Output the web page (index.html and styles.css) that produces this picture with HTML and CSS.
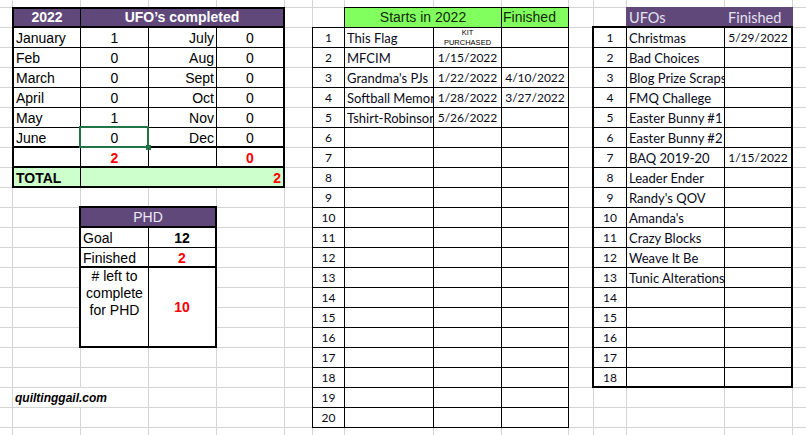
FILE: index.html
```html
<!DOCTYPE html>
<html lang="en">
<head>
<meta charset="utf-8">
<title>UFOs 2022</title>
<link rel="stylesheet" href="styles.css">
</head>
<body>
<div class="sheet">
  <div class="lines">
    <div></div><div></div><div></div><div></div><div></div>
    <div></div><div></div><div></div><div></div><div></div>
    <div></div><div></div><div></div><div></div><div></div>
  </div>

  <div class="tbl ufo">
    <div class="cell hd">2022</div>
    <div class="cell hd tr span3">UFO’s completed</div>
    <div class="cell">January</div><div class="cell c">1</div><div class="cell r">July</div><div class="cell c tr">0</div>
    <div class="cell">Feb</div><div class="cell c">0</div><div class="cell r">Aug</div><div class="cell c tr">0</div>
    <div class="cell">March</div><div class="cell c">0</div><div class="cell r">Sept</div><div class="cell c tr">0</div>
    <div class="cell">April</div><div class="cell c">0</div><div class="cell r">Oct</div><div class="cell c tr">0</div>
    <div class="cell">May</div><div class="cell c">1</div><div class="cell r">Nov</div><div class="cell c tr">0</div>
    <div class="cell tb">June</div><div class="cell c tb sel">0</div><div class="cell r tb">Dec</div><div class="cell c tr tb">0</div>
    <div class="cell tb"></div><div class="cell c tb red">2</div><div class="cell tb"></div><div class="cell c tr tb red">0</div>
    <div class="cell tb total bold">TOTAL</div><div class="cell tb tr total r red span3">2</div>
  </div>

  <div class="tbl phd">
    <div class="cell phd-hd tb tr span2">PHD</div>
    <div class="cell">Goal</div><div class="cell c tr bold">12</div>
    <div class="cell tb">Finished</div><div class="cell c tb tr red">2</div>
    <div class="cell tb left-note"># left to complete for PHD</div><div class="cell tb tr red mid">10</div>
  </div>

  <div class="site">quiltinggail.com</div>

  <div class="tbl starts-hd">
    <div class="cell c">Starts in 2022</div>
    <div class="cell">Finished</div>
  </div>

  <div class="tbl starts cal">
    <div class="cell c">1</div><div class="cell">This Flag</div><div class="cell c kit">KIT<br>PURCHASED</div><div class="cell"></div>
    <div class="cell c">2</div><div class="cell">MFCIM</div><div class="cell c">1/15/2022</div><div class="cell"></div>
    <div class="cell c">3</div><div class="cell">Grandma's PJs</div><div class="cell c">1/22/2022</div><div class="cell c">4/10/2022</div>
    <div class="cell c">4</div><div class="cell">Softball Memories</div><div class="cell c">1/28/2022</div><div class="cell c">3/27/2022</div>
    <div class="cell c">5</div><div class="cell">Tshirt-Robinson</div><div class="cell c">5/26/2022</div><div class="cell"></div>
    <div class="cell c">6</div><div class="cell"></div><div class="cell"></div><div class="cell"></div>
    <div class="cell c">7</div><div class="cell"></div><div class="cell"></div><div class="cell"></div>
    <div class="cell c">8</div><div class="cell"></div><div class="cell"></div><div class="cell"></div>
    <div class="cell c">9</div><div class="cell"></div><div class="cell"></div><div class="cell"></div>
    <div class="cell c">10</div><div class="cell"></div><div class="cell"></div><div class="cell"></div>
    <div class="cell c">11</div><div class="cell"></div><div class="cell"></div><div class="cell"></div>
    <div class="cell c">12</div><div class="cell"></div><div class="cell"></div><div class="cell"></div>
    <div class="cell c">13</div><div class="cell"></div><div class="cell"></div><div class="cell"></div>
    <div class="cell c">14</div><div class="cell"></div><div class="cell"></div><div class="cell"></div>
    <div class="cell c">15</div><div class="cell"></div><div class="cell"></div><div class="cell"></div>
    <div class="cell c">16</div><div class="cell"></div><div class="cell"></div><div class="cell"></div>
    <div class="cell c">17</div><div class="cell"></div><div class="cell"></div><div class="cell"></div>
    <div class="cell c">18</div><div class="cell"></div><div class="cell"></div><div class="cell"></div>
    <div class="cell c">19</div><div class="cell"></div><div class="cell"></div><div class="cell"></div>
    <div class="cell c">20</div><div class="cell"></div><div class="cell"></div><div class="cell"></div>
  </div>

  <div class="tbl ufos-hd cal">
    <div class="hcell">UFOs</div>
    <div class="hcell">Finished</div>
  </div>

  <div class="tbl ufos cal">
    <div class="cell c">1</div><div class="cell">Christmas</div><div class="cell c tr">5/29/2022</div>
    <div class="cell c">2</div><div class="cell">Bad Choices</div><div class="cell tr"></div>
    <div class="cell c">3</div><div class="cell">Blog Prize Scraps</div><div class="cell tr"></div>
    <div class="cell c">4</div><div class="cell">FMQ Challege</div><div class="cell tr"></div>
    <div class="cell c">5</div><div class="cell">Easter Bunny #1</div><div class="cell tr"></div>
    <div class="cell c">6</div><div class="cell">Easter Bunny #2</div><div class="cell tr"></div>
    <div class="cell c">7</div><div class="cell">BAQ 2019-20</div><div class="cell c tr">1/15/2022</div>
    <div class="cell c">8</div><div class="cell">Leader Ender</div><div class="cell tr"></div>
    <div class="cell c">9</div><div class="cell">Randy's QOV</div><div class="cell tr"></div>
    <div class="cell c">10</div><div class="cell">Amanda's</div><div class="cell tr"></div>
    <div class="cell c">11</div><div class="cell">Crazy Blocks</div><div class="cell tr"></div>
    <div class="cell c">12</div><div class="cell">Weave It Be</div><div class="cell tr"></div>
    <div class="cell c">13</div><div class="cell">Tunic Alterations</div><div class="cell tr"></div>
    <div class="cell c">14</div><div class="cell"></div><div class="cell tr"></div>
    <div class="cell c">15</div><div class="cell"></div><div class="cell tr"></div>
    <div class="cell c">16</div><div class="cell"></div><div class="cell tr"></div>
    <div class="cell c">17</div><div class="cell"></div><div class="cell tr"></div>
    <div class="cell c tb">18</div><div class="cell tb"></div><div class="cell tb tr"></div>
  </div>
</div>
</body>
</html>
```

FILE: styles.css
```css
:root {
  --cols: 13px 68px 68px 68px 68px 28px 32px 89px 68px 67px 25px 33px 98px 68px 1fr;
  --grid: #d4d4d4;
  --purple: #60497a;
}

html, body {
  margin: 0;
  padding: 0;
  background: #fff;
}

body {
  width: 806px;
  height: 435px;
  overflow: hidden;
  font-family: "Liberation Sans", Arial, sans-serif;
  font-size: 14px;
  color: #000;
}

.sheet {
  display: grid;
  grid-template-columns: var(--cols);
  grid-template-rows: 8px repeat(21, 20px) 1fr;
  width: 806px;
  height: 435px;
  background-image: linear-gradient(to bottom, transparent 19px, var(--grid) 19px);
  background-size: 100% 20px;
  background-position: 0 8px;
}

.lines {
  grid-column: 1 / -1;
  grid-row: 1 / -1;
  display: grid;
  grid-template-columns: var(--cols);
}

.lines > div {
  border-right: 1px solid var(--grid);
}

.lines > div:last-child {
  border-right: 0;
}

.tbl {
  display: grid;
  background: #fff;
}

.cell {
  box-sizing: border-box;
  border-right: 1px solid #000;
  border-bottom: 1px solid #000;
  line-height: 20px;
  padding: 0 2px;
  white-space: nowrap;
  overflow: hidden;
}

.c { text-align: center; }
.r { text-align: right; }
.tb { border-bottom-width: 2px; }
.tr { border-right-width: 2px; }
.span2 { grid-column: span 2; }
.span3 { grid-column: span 3; }
.bold { font-weight: bold; }
.red { color: #ff0000; font-weight: bold; }

/* UFO's completed table */
.ufo {
  grid-column: 2 / 6;
  grid-row: 2 / 11;
  margin: -1px 0 0 -1px;
  border-left: 2px solid #000;
  border-top: 2px solid #000;
  grid-template-columns: 67px 68px 68px 68px;
  grid-template-rows: 19px repeat(8, 20px);
}

.hd {
  background: var(--purple);
  color: #fff;
  font-weight: bold;
  text-align: center;
  line-height: 17px;
  border-bottom-width: 2px;
}

.total {
  background: #ccffcc;
}

.sel {
  position: relative;
  overflow: visible;
}

.sel::before {
  content: "";
  position: absolute;
  left: -2px;
  top: -2px;
  right: -1px;
  bottom: -2px;
  border: 2px solid #217346;
}

.sel::after {
  content: "";
  position: absolute;
  right: -3px;
  bottom: -4px;
  width: 5px;
  height: 5px;
  background: #217346;
}

/* PHD table */
.phd {
  grid-column: 3 / 5;
  grid-row: 12 / 19;
  margin: -2px 0 0 -2px;
  border-left: 2px solid #000;
  border-top: 2px solid #000;
  grid-template-columns: 68px 68px;
  grid-template-rows: 20px 20px 20px 80px;
}

.phd-hd {
  background: var(--purple);
  color: #ece8f6;
  text-align: center;
  line-height: 18px;
}

.left-note {
  white-space: normal;
  text-align: center;
  line-height: 17px;
}

.mid {
  display: flex;
  align-items: center;
  justify-content: center;
}

.site {
  grid-column: 2 / 4;
  grid-row: 21 / 22;
  align-self: start;
  height: 19px;
  margin-right: 1px;
  padding-left: 2px;
  background: #fff;
  font-style: italic;
  font-weight: bold;
  font-size: 12px;
  line-height: 20px;
  white-space: nowrap;
}

/* Calibri-like tables */
.cal {
  font-family: Lato, "Open Sans", sans-serif;
  font-size: 13px;
  color: #0a0a1a;
}

.cal .c {
  font-size: 12px;
}

.starts-hd {
  grid-column: 8 / 11;
  grid-row: 2 / 3;
  margin: -1px 0 0 -1px;
  border-left: 1px solid #000;
  border-top: 1px solid #000;
  grid-template-columns: 157px 67px;
  background: #80ff5f;
  color: #14280c;
}

.starts-hd .cell {
  line-height: 19px;
  padding: 0 1px;
}

.starts {
  grid-column: 7 / 11;
  grid-row: 3 / 23;
  margin: -1px 0 0 -1px;
  border-left: 1px solid #000;
  border-top: 1px solid #000;
  grid-template-columns: 32px 89px 68px 67px;
  grid-auto-rows: 20px;
}

.cal .kit {
  font-family: "Liberation Sans", Arial, sans-serif;
  font-size: 7.5px;
  line-height: 10px;
  color: #000;
}

.ufos-hd {
  grid-column: 13 / 15;
  grid-row: 2 / 3;
  margin: -1px 0 0 -1px;
  grid-template-columns: 99px 68px;
  background: var(--purple);
  color: #e6e1f2;
  font-size: 14.5px;
}

.hcell {
  padding: 0 3px;
  line-height: 21px;
  white-space: nowrap;
}

.ufos {
  grid-column: 12 / 15;
  grid-row: 3 / 21;
  margin: -2px 0 0 -2px;
  border-left: 2px solid #000;
  border-top: 2px solid #000;
  grid-template-columns: 33px 98px 68px;
  grid-auto-rows: 20px;
}
```
